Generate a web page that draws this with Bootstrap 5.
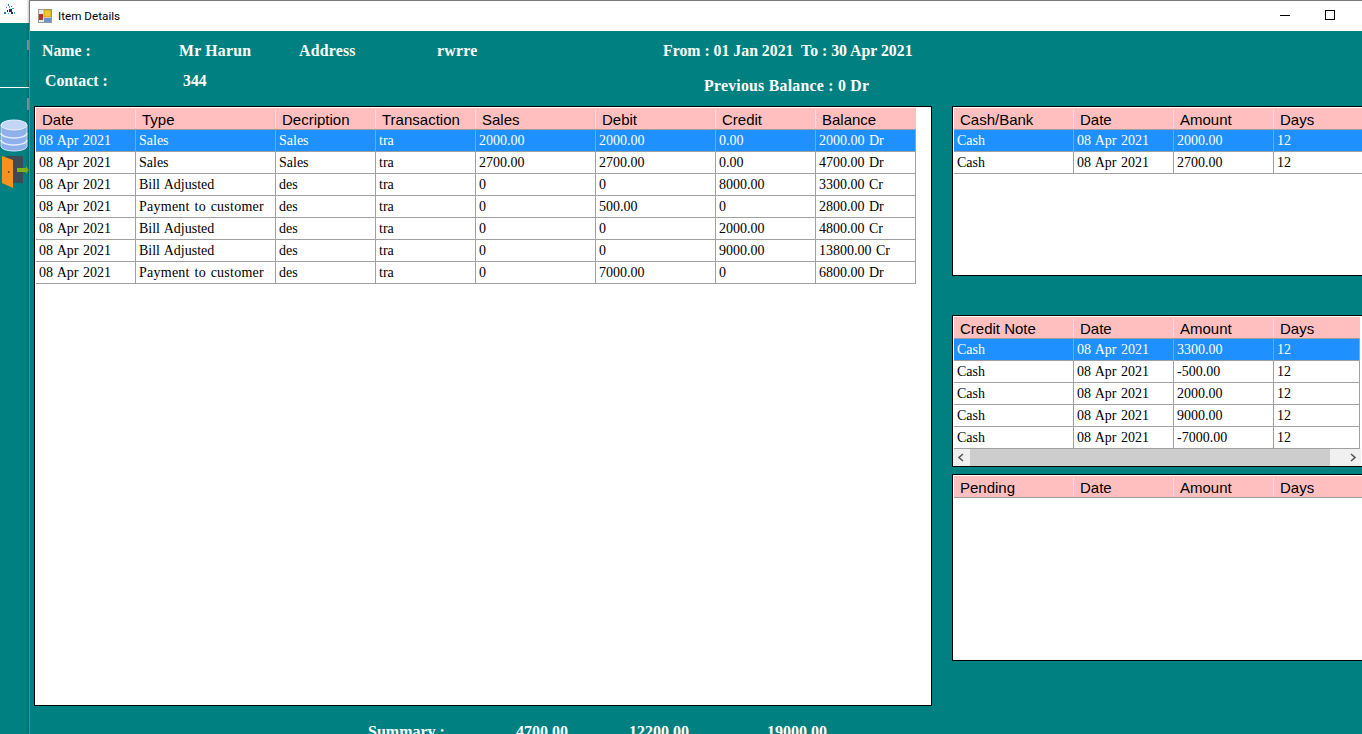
<!DOCTYPE html>
<html lang="en"><head><meta charset="utf-8"><title>Item Details</title>
<link rel="stylesheet" href="https://cdn.jsdelivr.net/npm/bootstrap@5.3.0/dist/css/bootstrap.min.css">
<style>
html,body{margin:0;height:734px;overflow:hidden;background:#008080}
.desk{position:relative;width:1362px;height:734px;overflow:hidden;background:#008080}
.side-top{height:23px;width:29px;background:#fff}
.side-rule{height:1px;width:29px;background:#fff;margin-top:64px}
.side-ic{position:absolute;left:0}
.win{position:absolute;left:29px;top:0;width:1333px;height:734px;background:#008080;border-top:1px solid #7a7a7a;border-left:1px solid #7a7a7a;box-shadow:-1px 0 2px rgba(0,0,0,.25)}
.tbar{height:30px;background:#fff;font:11.7px "Roboto","Liberation Sans",sans-serif;color:#000;padding-left:8px}
.tbar-title{margin-left:6px}
.tbar-btns{position:absolute;right:27px;top:9px;gap:35px}
.win-min{width:10px;height:1px;background:#000}
.win-max{width:10px;height:10px;border:1px solid #000}
.hdr{height:75px;position:relative;color:#fff;font:bold 15.8px "Liberation Serif",serif}
.hdr-row1{padding:10px 0 0 12px;height:30px;line-height:20px}
.hdr-row2{padding:10px 0 0 15px;line-height:20px}
.w-name{width:137px}.w-harun{width:120px}.w-addr{width:138px}.w-rw{width:226px}
.w-pb{margin-left:262px;padding-top:5px}.w-con{width:138px}.w-344{width:259px}
.spaced{letter-spacing:.25px}
.main{padding-left:4px}
.pane{background:#fff;border:1px solid #000;overflow:hidden;position:relative;padding-top:1px}
.pane-l{width:898px;height:600px}
.rcol{margin-left:20px;width:420px}
.pane-a{height:170px;margin-bottom:39px}
.pane-b{height:152px;margin-bottom:7px}
.pane-c{height:187px}
.grid{table-layout:fixed;border-collapse:separate;border-spacing:0;margin:0 0 0 1px;background:#fff}
.grid-l{width:880px}.grid-r{width:420px}.grid-b{width:406px}
.grid th{position:relative;height:22px;padding:2px 0 0 6px;background:#ffbfbf;font:400 15px/19px "Liberation Sans",sans-serif;color:#000;border-right:0;border-bottom:1px solid #a0a0a0;border-top:0;vertical-align:middle}
.grid th::after{content:"";position:absolute;right:-1px;top:2px;bottom:1px;width:2px;background:#eee6e6}
.grid th:last-child::after{display:none}
.grid td{height:22px;padding:0 0 0 3px;background:#fff;font:14px/21px "Liberation Serif",serif;word-spacing:1px;color:#000;border-right:1px solid #a0a0a0;border-bottom:1px solid #a0a0a0;border-top:0;white-space:nowrap;overflow:hidden;vertical-align:middle}
.grid td.wide{letter-spacing:.25px}
.grid tr.sel td{background:#1e90ff;color:#fff}
.sbar{position:absolute;left:0;width:408px;bottom:0;height:17px;background:#f0f0f0;color:#555}
.sbar-btn{width:17px;flex:none}
.sbar-thumb{width:360px;height:100%;background:#cdcdcd;flex:none}
.sbar-gap{flex:1}
.sum{position:absolute;left:0;top:721px;color:#fff;font:bold 16px "Liberation Serif",serif;line-height:20px;padding-left:338px}
.s1{width:148px}.s2{width:113px}.s3{width:138px}
.side-tick{position:absolute;left:27px;width:2px;background:#9a9a9a}
.t1{top:40px;height:10px}.t2{top:98px;height:12px}
</style></head><body>
<div class="desk">
 <div class="side-top"></div>
 <div class="side-rule"></div>
 <span class="side-tick t1"></span><span class="side-tick t2"></span>
 <svg class="side-ic" style="top:3px" width="17" height="14" viewBox="0 0 17 14"><g fill="#2f78c0"><rect x="4" y="9" width="2" height="2"/><rect x="8" y="1" width="1" height="2"/><rect x="11" y="3" width="1" height="1"/><rect x="6" y="4" width="1" height="1"/></g><g fill="#24344a"><rect x="9" y="6" width="3" height="3"/><rect x="11" y="9" width="2" height="2"/><rect x="7" y="7" width="1" height="2"/></g><g fill="#38b0d0"><rect x="12" y="5" width="2" height="1"/><rect x="8" y="10" width="1" height="1"/><rect x="14" y="9" width="1" height="2"/><rect x="9" y="3" width="1" height="2"/></g></svg>
 <svg class="side-ic" style="top:119px" width="29" height="33" viewBox="0 0 29 33"><path d="M1 6v21c0 3 6 5 13 5s13-2 13-5V6z" fill="#8fb0ea" stroke="#d8e4fb"/><ellipse cx="14" cy="6" rx="13" ry="5" fill="#c4d6f6" stroke="#e8f0ff"/><path d="M1 14c0 3 6 5 13 5s13-2 13-5M1 21c0 3 6 5 13 5s13-2 13-5" fill="none" stroke="#e4edfd" stroke-width="1.5"/></svg>
 <svg class="side-ic" style="top:155px" width="29" height="34" viewBox="0 0 29 34"><rect x="6" y="1" width="17" height="27" fill="#3f4a55"/><path d="M2 1 13 5v28L2 28z" fill="#f7931a"/><rect x="8" y="16" width="1.5" height="2" fill="#7a4a10"/><path d="M17 13h9v-2l3 4-3 4v-2h-9z" fill="#7cb518"/></svg>
 <div class="win d-flex flex-column">
  <div class="tbar d-flex align-items-center">
   <svg width="14" height="14" viewBox="0 0 14 14"><rect x=".5" y=".5" width="13" height="13" fill="#e8e8e8" stroke="#999"/><rect x="6" y="1" width="7" height="7" fill="#f3c530" stroke="#b08a10" stroke-width=".6"/><rect x="1" y="5" width="4" height="6" fill="#c03028"/><rect x="6" y="9" width="7" height="4" fill="#6d92d0"/></svg>
   <span class="tbar-title">Item Details</span>
   <div class="tbar-btns d-flex align-items-center"><span class="win-min"></span><span class="win-max"></span></div>
  </div>
  <div class="hdr">
   <div class="hdr-row1 d-flex"><span class="w-name">Name :</span><span class="w-harun spaced">Mr Harun</span><span class="w-addr spaced">Address</span><span class="w-rw spaced">rwrre</span><span>From : 01 Jan 2021&nbsp; To : 30 Apr 2021</span></div>
   <div class="hdr-row2 d-flex"><span class="w-con">Contact :</span><span class="w-344">344</span><span class="w-pb spaced">Previous Balance : 0 Dr</span></div>
  </div>
  <div class="main d-flex align-items-start">
   <div class="pane pane-l flex-shrink-0">
    <table class="grid grid-l">
     <colgroup><col style="width:100px"><col style="width:140px"><col style="width:100px"><col style="width:100px"><col style="width:120px"><col style="width:120px"><col style="width:100px"><col style="width:100px"></colgroup>
     <thead><tr><th>Date</th><th>Type</th><th>Decription</th><th>Transaction</th><th>Sales</th><th>Debit</th><th>Credit</th><th>Balance</th></tr></thead>
     <tbody>
      <tr class="sel"><td>08 Apr 2021</td><td>Sales</td><td>Sales</td><td>tra</td><td>2000.00</td><td>2000.00</td><td>0.00</td><td>2000.00 Dr</td></tr>
      <tr><td>08 Apr 2021</td><td>Sales</td><td>Sales</td><td>tra</td><td>2700.00</td><td>2700.00</td><td>0.00</td><td>4700.00 Dr</td></tr>
      <tr><td>08 Apr 2021</td><td>Bill Adjusted</td><td>des</td><td>tra</td><td>0</td><td>0</td><td>8000.00</td><td>3300.00 Cr</td></tr>
      <tr><td>08 Apr 2021</td><td class="wide">Payment to customer</td><td>des</td><td>tra</td><td>0</td><td>500.00</td><td>0</td><td>2800.00 Dr</td></tr>
      <tr><td>08 Apr 2021</td><td>Bill Adjusted</td><td>des</td><td>tra</td><td>0</td><td>0</td><td>2000.00</td><td>4800.00 Cr</td></tr>
      <tr><td>08 Apr 2021</td><td>Bill Adjusted</td><td>des</td><td>tra</td><td>0</td><td>0</td><td>9000.00</td><td>13800.00 Cr</td></tr>
      <tr><td>08 Apr 2021</td><td class="wide">Payment to customer</td><td>des</td><td>tra</td><td>0</td><td>7000.00</td><td>0</td><td>6800.00 Dr</td></tr>
     </tbody>
    </table>
   </div>
   <div class="rcol flex-shrink-0">
    <div class="pane pane-a">
     <table class="grid grid-r">
      <colgroup><col style="width:120px"><col style="width:100px"><col style="width:100px"><col style="width:100px"></colgroup>
      <thead><tr><th>Cash/Bank</th><th>Date</th><th>Amount</th><th>Days</th></tr></thead>
      <tbody>
       <tr class="sel"><td>Cash</td><td>08 Apr 2021</td><td>2000.00</td><td>12</td></tr>
       <tr><td>Cash</td><td>08 Apr 2021</td><td>2700.00</td><td>12</td></tr>
      </tbody>
     </table>
    </div>
    <div class="pane pane-b">
     <table class="grid grid-b">
      <colgroup><col style="width:120px"><col style="width:100px"><col style="width:100px"><col style="width:86px"></colgroup>
      <thead><tr><th>Credit Note</th><th>Date</th><th>Amount</th><th>Days</th></tr></thead>
      <tbody>
       <tr class="sel"><td>Cash</td><td>08 Apr 2021</td><td>3300.00</td><td>12</td></tr>
       <tr><td>Cash</td><td>08 Apr 2021</td><td>-500.00</td><td>12</td></tr>
       <tr><td>Cash</td><td>08 Apr 2021</td><td>2000.00</td><td>12</td></tr>
       <tr><td>Cash</td><td>08 Apr 2021</td><td>9000.00</td><td>12</td></tr>
       <tr><td>Cash</td><td>08 Apr 2021</td><td>-7000.00</td><td>12</td></tr>
       <tr><td>Cash</td><td>08 Apr 2021</td><td>1000.00</td><td>12</td></tr>
      </tbody>
     </table>
     <div class="sbar d-flex align-items-center">
      <svg class="sbar-btn" height="9" viewBox="0 0 17 9"><path d="M10 1 6 4.5 10 8" fill="none" stroke="#555" stroke-width="1.6"/></svg>
      <div class="sbar-thumb"></div><div class="sbar-gap"></div>
      <svg class="sbar-btn" height="9" viewBox="0 0 17 9"><path d="M7 1l4 3.5L7 8" fill="none" stroke="#555" stroke-width="1.6"/></svg>
     </div>
    </div>
    <div class="pane pane-c">
     <table class="grid grid-r">
      <colgroup><col style="width:120px"><col style="width:100px"><col style="width:100px"><col style="width:100px"></colgroup>
      <thead><tr><th>Pending</th><th>Date</th><th>Amount</th><th>Days</th></tr></thead>
     </table>
    </div>
   </div>
  </div>
  <div class="sum d-flex"><div class="s1">Summary :</div><div class="s2">4700.00</div><div class="s3">12200.00</div><div>19000.00</div></div>
 </div>
</div>
</body></html>
